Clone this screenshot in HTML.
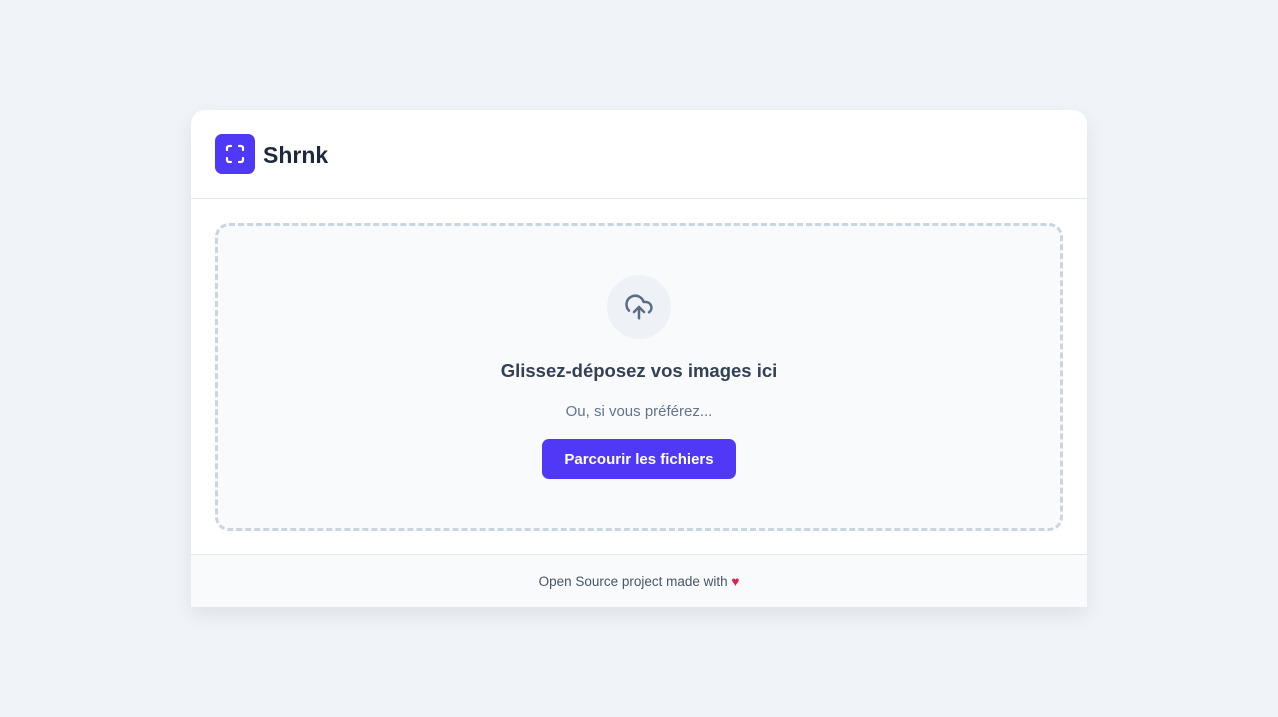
<!DOCTYPE html><html><head><style>
body{margin:0;width:1278px;height:717px;background:#f0f4f8;font-family:"Liberation Sans",sans-serif;position:relative;overflow:hidden}
.card{position:absolute;left:191px;top:110px;width:896px;height:497px;background:#fff;border-radius:14px 14px 0 0;box-shadow:0 8px 20px rgba(0,0,0,.08);overflow:hidden}
.hdr{height:88px;border-bottom:1px solid #e2e8f0;position:relative}
.logo{position:absolute;left:24px;top:24px;width:40px;height:40px;border-radius:7px;background:#4f39f6}
.title{position:absolute;left:72px;top:32px;font-size:23px;font-weight:bold;color:#1e293b}
.drop{position:absolute;left:24px;top:113px;width:842px;height:302px;border:3px dashed #cbd5e1;border-radius:14px;background:#f8fafc}
.circ{position:absolute;left:389px;top:49px;width:64px;height:64px;border-radius:50%;background:#eef2f7}
.h{position:absolute;top:134px;width:100%;text-align:center;font-size:18.5px;font-weight:bold;color:#334155}
.s{position:absolute;top:177px;width:100%;text-align:center;font-size:15px;color:#64748b}
.btn{position:absolute;left:324px;top:213px;width:194px;height:40px;border-radius:7px;background:#4f39f6;color:#fff;font-size:15px;font-weight:bold;text-align:center;line-height:42px}
.ft{position:absolute;left:0;top:444px;width:100%;height:53px;background:#f8fafc;border-top:1px solid #e2e8f0;text-align:center;line-height:54px;font-size:13.5px;color:#475569}
</style></head><body>
<div class="card">
<div class="hdr"><div class="logo"><svg width="40" height="40" viewBox="0 0 40 40" fill="none" stroke="#fff" stroke-width="2.2" stroke-linecap="round"><path d="M12 16v-2a2 2 0 0 1 2-2h2M24 12h2a2 2 0 0 1 2 2v2M28 24v2a2 2 0 0 1-2 2h-2M16 28h-2a2 2 0 0 1-2-2v-2"/></svg></div><div class="title">Shrnk</div></div>
<div class="drop">
<div class="circ"><svg style="position:absolute;left:17px;top:17px" width="30" height="30" viewBox="0 0 24 24" fill="none" stroke="#5a6b85" stroke-width="2" stroke-linecap="round" stroke-linejoin="round"><path d="M4 14.9A7 7 0 1 1 15.7 8h1.8a4.5 4.5 0 0 1 2.5 8.2"/><path d="M12 12v9"/><path d="M16 16l-4-4-4 4"/></svg></div>
<div class="h">Glissez-déposez vos images ici</div>
<div class="s">Ou, si vous préférez...</div>
<div class="btn">Parcourir les fichiers</div>
</div>
<div class="ft">Open Source project made with <span style="color:#e11d48">♥</span></div>
</div>
</body></html>
